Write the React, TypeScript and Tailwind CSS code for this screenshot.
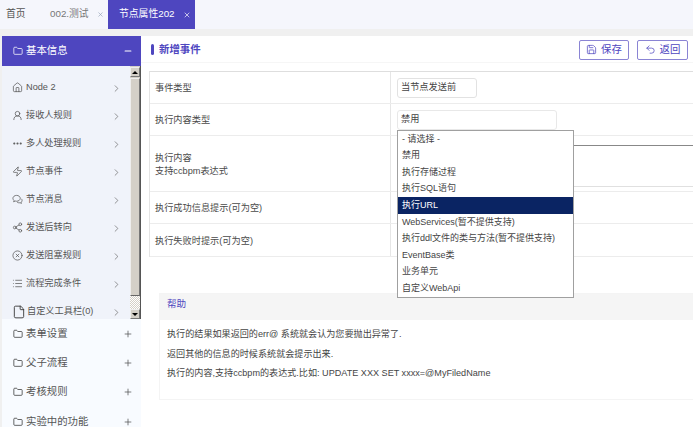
import { ChevronRight, CircleX, File, Folder, House, List, Minus, MoreHorizontal, Plus, Save, Share2, Undo2, UserRound, X, Zap } from 'lucide-react';
import type { ComponentType, ReactNode } from 'react';

const font = { fontFamily: '"Liberation Sans", "Noto Sans CJK SC", sans-serif' };

type IconProps = { size?: number; strokeWidth?: number; className?: string };

// two overlapping round bubbles, lucide only has the square one
function Bubbles({ size = 11, strokeWidth = 1.6, className }: IconProps) {
  return (
    <svg width={size} height={size} viewBox="0 0 24 24" fill="none" stroke="currentColor" strokeWidth={strokeWidth} className={className}>
      <path d="M10 3c-4.4 0-8 2.8-8 6.4 0 1.8.9 3.4 2.4 4.6L3.5 17l3.6-1.6c.9.3 1.9.4 2.9.4 4.4 0 8-2.8 8-6.4S14.4 3 10 3z" />
      <path d="M20.5 10.5c1 1 1.5 2.2 1.5 3.5 0 1.5-.8 2.9-2 3.8l.6 2.7-3.1-1.5c-2.4.6-5 0-6.6-1.5" />
    </svg>
  );
}

const navItems: { label: string; icon: ComponentType<IconProps>; stroke?: number }[] = [
  { label: 'Node 2', icon: House },
  { label: '接收人规则', icon: UserRound },
  { label: '多人处理规则', icon: MoreHorizontal, stroke: 2.6 },
  { label: '节点事件', icon: Zap },
  { label: '节点消息', icon: Bubbles },
  { label: '发送后转向', icon: Share2 },
  { label: '发送阻塞规则', icon: CircleX },
  { label: '流程完成条件', icon: List },
];

const groups = ['表单设置', '父子流程', '考核规则', '实验中的功能'];

const options = [
  '- 请选择 -',
  '禁用',
  '执行存储过程',
  '执行SQL语句',
  '执行URL',
  'WebServices(暂不提供支持)',
  '执行ddl文件的类与方法(暂不提供支持)',
  'EventBase类',
  '业务单元',
  '自定义WebApi',
];

function Scrollbar() {
  return (
    <div className="flex h-full w-[11px] shrink-0 flex-col border-r border-[#555] bg-[#d4d0c8] pt-px">
      <div className="flex h-[10px] items-center justify-center border border-[#eee] border-r-[#777] border-b-[#777]">
        <div className="h-0 w-0 border-x-[3px] border-b-[3px] border-x-transparent border-b-black" />
      </div>
      <div className="mt-px h-[218px] border border-[#eee] border-r-[#777] border-b-[#666]" />
      <div className="flex-1 bg-[repeating-conic-gradient(#d4d0c8_0_25%,#fff_0_50%)] bg-[length:2px_2px]" />
      <div className="flex h-[10px] items-center justify-center border border-[#eee] border-r-[#777] border-b-[#777]">
        <div className="h-0 w-0 border-x-[3px] border-t-[3px] border-x-transparent border-t-black" />
      </div>
    </div>
  );
}

function Sidebar() {
  return (
    <aside className="flex w-[139px] shrink-0 flex-col overflow-hidden">
      <div className="flex h-[30px] shrink-0 items-center justify-between bg-[#4e46bf] pl-[11px] pr-[8px] text-[10.4px] text-white">
        <span className="flex items-center gap-[3px]">
          <Folder size={10} strokeWidth={1.8} />
          基本信息
        </span>
        <Minus size={10} strokeWidth={2.5} />
      </div>
      <div className="flex h-[253px] shrink-0 bg-[#f0f3fa]">
        <div className="flex-1 overflow-hidden pt-[8px]">
          {navItems.map(({ label, icon: Icon, stroke }) => (
            <div key={label} className="flex h-[28px] items-center justify-between pl-[10px] pr-[8px] text-[9.2px] text-[#555]">
              <span className="flex items-center gap-[3px]">
                <Icon size={11} strokeWidth={stroke ?? 1.6} className="text-[#555]" />
                {label}
              </span>
              <ChevronRight size={11} strokeWidth={1.5} className="text-[#666]" />
            </div>
          ))}
          <div className="flex h-[28px] items-center justify-between pl-[10px] pr-[8px] text-[9.2px] text-[#555]">
            <span className="flex items-center gap-px">
              <File size={14} strokeWidth={1.5} className="text-[#333]" />
              自定义工具栏(0)
            </span>
            <ChevronRight size={11} strokeWidth={1.5} className="text-[#666]" />
          </div>
        </div>
        <Scrollbar />
      </div>
      <div className="flex-1 bg-[#f8fbff]">
        {groups.map((g) => (
          <div key={g} className="flex h-[29.3px] items-center justify-between pl-[11px] pr-[8px] text-[10.4px] text-[#555]">
            <span className="flex items-center gap-[3px]">
              <Folder size={10} strokeWidth={1.8} className="text-[#333]" />
              {g}
            </span>
            <Plus size={10} strokeWidth={1.8} className="text-[#555]" />
          </div>
        ))}
      </div>
    </aside>
  );
}

function Row({ label, height, children }: { label: ReactNode; height: string; children?: ReactNode }) {
  return (
    <div className={`flex border-b border-[#ececec] ${height}`}>
      <div className="flex w-[241px] shrink-0 items-center border-r border-[#e6e6e6] pl-[5px] pt-[2px] text-[9.2px] leading-[13px] text-[#4a4a4a]">
        {label}
      </div>
      <div className="flex-1 pl-[6px]">{children}</div>
    </div>
  );
}

function Main() {
  return (
    <main className="relative flex-1 overflow-hidden bg-white">
      <div className="flex h-[27px] items-center justify-between border-b border-[#f6f6f6] pl-[10px] pr-[5px] pt-[1px]">
        <div className="mt-[1px] flex items-center gap-[5px] text-[10.4px] font-bold text-[#4e46bf]">
          <div className="h-[11px] w-[3px] rounded-sm bg-[#4e46bf]" />
          新增事件
        </div>
        <div className="flex gap-[8px] text-[10.4px] text-[#4e46bf]">
          <button className="flex h-[20px] w-[50px] items-center justify-center gap-[4px] rounded-[2px] border border-[#8a84d4]">
            <Save size={11} strokeWidth={1.6} />
            保存
          </button>
          <button className="flex h-[20px] w-[51px] items-center justify-center gap-[4px] rounded-[2px] border border-[#8a84d4]">
            <Undo2 size={11} strokeWidth={1.6} />
            返回
          </button>
        </div>
      </div>

      <div className="ml-[8px] mt-[8px] w-[700px] border-l border-t border-[#e4e4e4] border-t-[#dedede]">
        <Row label="事件类型" height="h-[32px]">
          <div className="mt-[6px] flex h-[20px] w-[80px] items-center rounded-[3px] border border-[#e2e2e2] pl-[3px] text-[9.2px] text-[#444]">
            当节点发送前
          </div>
        </Row>
        <Row label="执行内容类型" height="h-[32px]">
          <div className="mt-[6px] flex h-[20px] w-[160px] items-center rounded-[3px] border border-[#e8e8e8] pl-[3px] text-[9.2px] text-[#444]">
            禁用
          </div>
        </Row>
        <Row
          label={
            <span>
              执行内容
              <br />
              支持ccbpm表达式
            </span>
          }
          height="h-[56px]"
        >
          <div className="mt-[9px] h-[42px] w-full border border-[#e0e0e0] border-t-[#888] border-l-[#888]" />
        </Row>
        <Row label="执行成功信息提示(可为空)" height="h-[32px]" />
        <Row label="执行失败时提示(可为空)" height="h-[33px]" />
      </div>

      <section className="ml-[18px] mt-[36px] h-[107px] w-[600px] border border-[#f4f4f4]">
        <div className="flex h-[26px] items-center bg-[#f5f5f5] pb-[5px] pl-[7px] text-[9.6px] text-[#4e46bf]">帮助</div>
        <div className="pl-[7px] pt-[5px] text-[9.1px] leading-[19.5px] text-[#444]">
          <p>执行的结果如果返回的err@ 系统就会认为您要抛出异常了.</p>
          <p>返回其他的信息的时候系统就会提示出来.</p>
          <p>执行的内容,支持ccbpm的表达式.比如: UPDATE XXX SET xxxx=@MyFiledName</p>
        </div>
      </section>

      {/* open select list sits over the form */}
      <ul className="absolute left-[256px] top-[94px] w-[177px] border border-[#a0a0a0] bg-white text-[9px] text-[#444]">
        {options.map((o) => (
          <li
            key={o}
            className={`flex h-[16.6px] items-center whitespace-nowrap pl-[4px] ${o === '执行URL' ? 'bg-[#0a2463] text-white' : ''}`}
          >
            {o}
          </li>
        ))}
      </ul>
    </main>
  );
}

export default function App() {
  return (
    <div className="flex h-[427px] w-[693px] flex-col overflow-hidden bg-[#f0f0f0]" style={font}>
      <div className="flex h-[29px] shrink-0 items-stretch bg-[#f5f6fc] text-[9.8px]">
        <div className="flex w-[50px] items-center pl-[6px] text-[#555]">首页</div>
        <div className="flex w-[58px] items-center gap-[8px] text-[#777]">
          002.测试
          <X size={7} strokeWidth={2} className="text-[#8a9ab0]" />
        </div>
        <div className="flex w-[87px] items-center justify-between bg-[#4e46bf] pl-[11px] pr-[4px] text-white">
          节点属性202
          <X size={8} strokeWidth={2} />
        </div>
      </div>
      <div className="flex min-h-0 flex-1 pl-[2px] pt-[7px]">
        <Sidebar />
        <Main />
      </div>
    </div>
  );
}
